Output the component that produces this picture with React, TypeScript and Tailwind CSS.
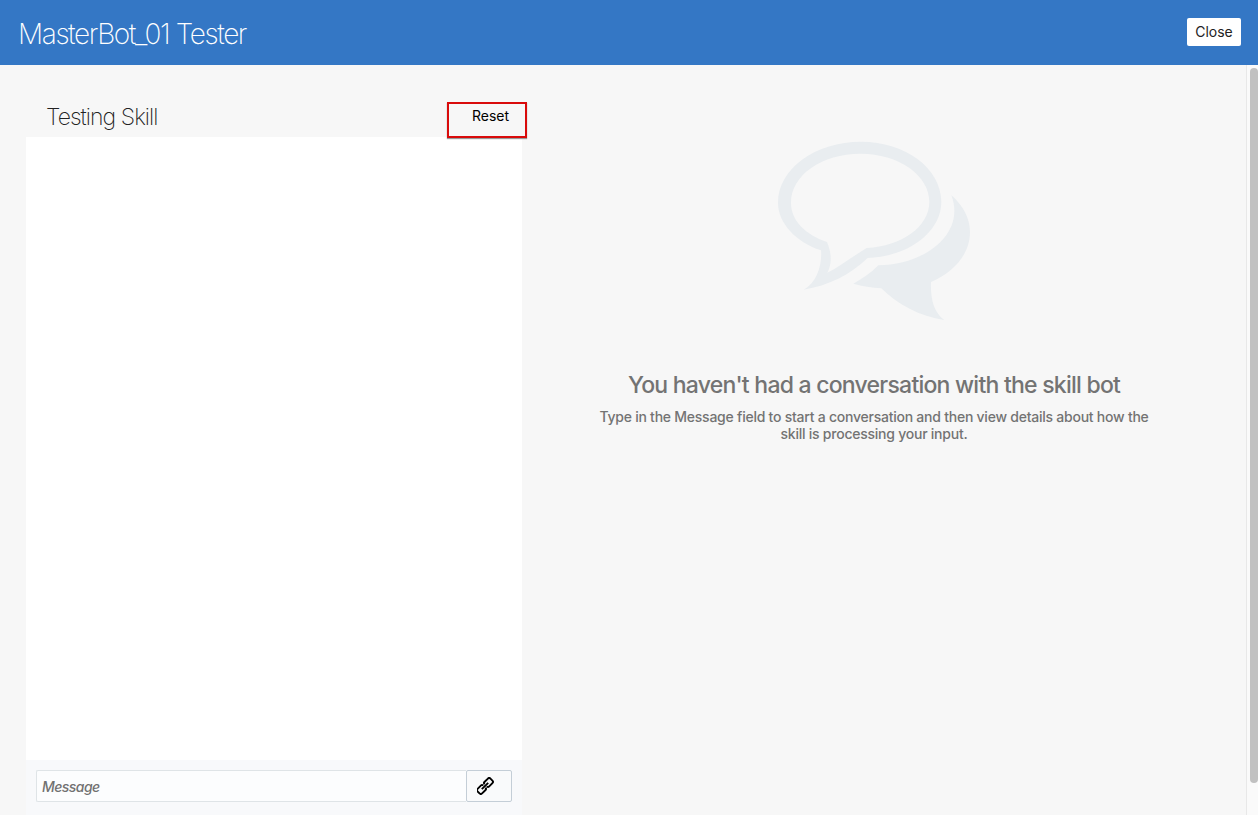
function ChatBubbles() {
  return (
    <svg width="230" height="210" viewBox="0 0 690 630" fill="#e9edf0" aria-hidden="true">
      <path
        fillRule="evenodd"
        d="M303 50C437 50 544 130 544 231C544 322 442 396 323 399C270 450 205 482 131 494C170 474 187 420 183 376C106 350 54 293 54 233C54 131 167 50 303 50ZM301 86C186 86 93 150 93 233C93 286 135 328 201 351C212 378 219 410 202 443C241 424 278 394 320 369C425 364 508 305 508 231C508 150 416 86 301 86Z"
      />
      <path d="M574 211C608 240 630 280 630 321C630 385 584 441 513 471C511 521 521 562 553 585C480 575 412 538 364 490C335 488 307 484 280 476C306 462 333 444 355 421C472 420 583 352 583 258C583 242 580 226 574 211Z" />
    </svg>
  );
}

function LinkIcon() {
  return (
    <svg width="18" height="18" viewBox="0 0 18 18" fill="none" stroke="#000" strokeWidth="1.9" aria-hidden="true">
      <g transform="translate(-1 0) rotate(-45 9 9)">
        <path d="M8 7.5V7.2Q8 5.8 6.6 5.8H1.7Q-0.1 5.8 -0.1 7.6V10.4Q-0.1 12.2 1.7 12.2H6.6Q8 12.2 8 10.8V10.5" />
        <path d="M10 7.5V7.2Q10 5.8 11.4 5.8H16.3Q18.1 5.8 18.1 7.6V10.4Q18.1 12.2 16.3 12.2H11.4Q10 12.2 10 10.8V10.5" />
        <path d="M4.5 9H13.5" />
      </g>
    </svg>
  );
}

function Header() {
  return (
    <header className="flex h-[65px] shrink-0 items-center justify-between bg-[#3477c5] pr-[17px] pl-[18px]">
      <h1 className="pt-[2px] text-[28px] leading-9 font-extralight tracking-[-1.4px] whitespace-nowrap text-white">
        MasterBot_01 Tester
      </h1>
      <button className="mb-px h-7 w-[54px] rounded-[2px] bg-white text-[14px] leading-7 text-[#222]">
        Close
      </button>
    </header>
  );
}

function Conversation() {
  return (
    <section className="flex w-[496px] shrink-0 flex-col">
      <div className="relative flex h-[72px] shrink-0 justify-between pt-[34px] pl-5">
        <h2 className="text-[23px] leading-9 font-extralight tracking-[-0.95px] text-[#222]">Testing Skill</h2>
        <button className="absolute top-[37px] left-[421px] h-9 w-20 border-2 border-[#d90b0b] pb-[9px] pl-[7px] text-[14px] leading-5 text-black shadow-[0_1px_1px_#999]">
          Reset
        </button>
      </div>
      <div className="grow bg-white" />
      <div className="flex h-[55px] shrink-0 gap-0 bg-[#f8f9fb] px-[10px] pt-[10px]">
        <input
          className="h-8 min-w-0 grow rounded-l-[2px] border border-r-0 border-[#dfe4e7] bg-[#fcfdfe] px-[5px] pt-px text-[14px] font-medium tracking-[-0.55px] italic outline-none placeholder:text-[#717171]"
          placeholder="Message"
          aria-label="Message"
        />
        <button
          className="flex h-8 w-[46px] items-center rounded-[2px] border border-[#c4ced7] bg-[#f9fafb] pl-[10px]"
          aria-label="Attach link"
        >
          <LinkIcon />
        </button>
      </div>
    </section>
  );
}

function EmptyState() {
  return (
    <section className="flex min-w-0 grow flex-col items-center pt-[60px] text-center text-[#737373]">
      <div className="pl-[2px]">
        <ChatBubbles />
      </div>
      <h3 className="mt-[34px] text-[23px] leading-8 font-medium tracking-[-0.76px] whitespace-nowrap">
        You haven't had a conversation with the skill bot
      </h3>
      <p className="mt-[7px] text-[14px] leading-[17px] font-medium tracking-[-0.24px] whitespace-nowrap">
        Type in the Message field to start a conversation and then view details about how the
        <br />
        skill is processing your input.
      </p>
    </section>
  );
}

export default function App() {
  return (
    <div className="flex h-[815px] w-[1258px] flex-col overflow-hidden bg-[#f7f7f7] font-['Inter',sans-serif]">
      <Header />
      <main className="flex min-h-0 grow pl-[26px]">
        <Conversation />
        <div className="flex w-[704px] justify-center">
          <EmptyState />
        </div>
        <div className="ml-auto w-3 shrink-0 border-l border-[#e8e8e8] bg-[#fafafa] pt-[3px] pl-[3px]">
          <div className="h-[715px] rounded-full bg-[#c1c1c1]" />
        </div>
      </main>
    </div>
  );
}
